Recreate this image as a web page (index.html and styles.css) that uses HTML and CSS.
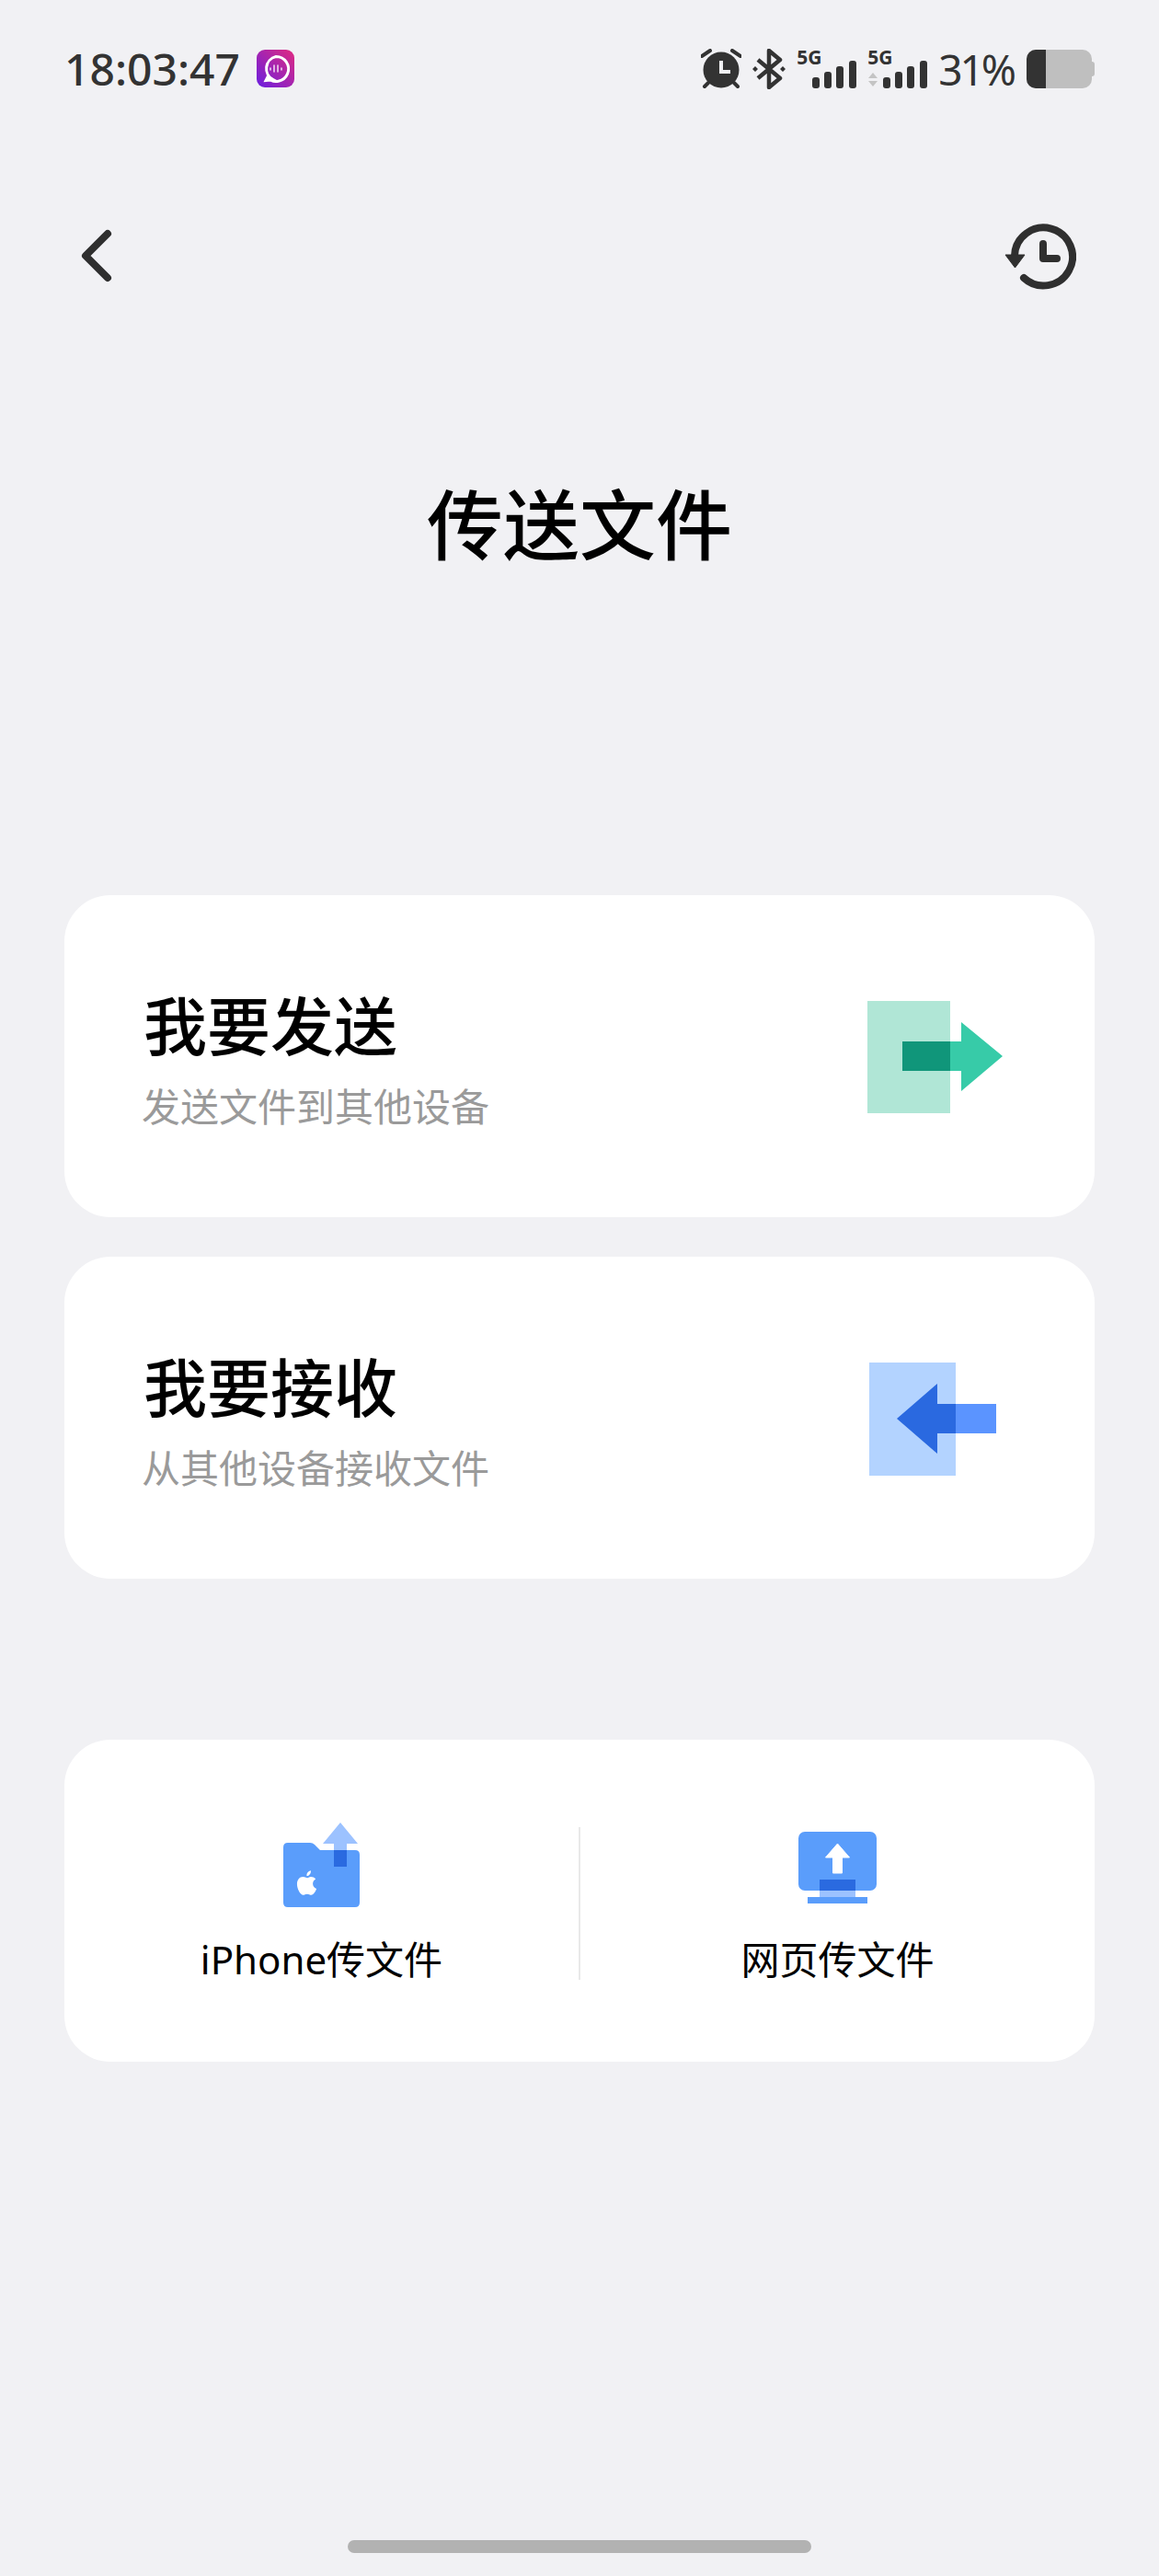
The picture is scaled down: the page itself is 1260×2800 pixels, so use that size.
FILE: index.html
```html
<!DOCTYPE html>
<html lang="zh-CN">
  <head>
    <meta charset="UTF-8" />
    <meta name="viewport" content="width=device-width, initial-scale=1.0" />
    <title>传送文件</title>
    <link rel="stylesheet" href="styles.css">
  </head>
  <body>
    <div class="page">
      <div class="status-bar">
        <div class="status-left">
          <span class="time">18:03:47</span>
          <svg class="app-icon" width="42" height="42" viewBox="0 0 42 42">
            <defs>
              <linearGradient id="appGrad" x1="0" y1="1" x2="1" y2="0">
                <stop offset="0" stop-color="#6a1ee0" />
                <stop offset="1" stop-color="#e02a80" />
              </linearGradient>
            </defs>
            <rect width="41" height="41" rx="9" fill="url(#appGrad)" />
            <path d="M21 7.500a13.500 13.500 0 1 1-9.500 23l-1.500 3 8-.8A13.500 13.500 0 0 1 21 7.500z" fill="none" stroke="#fff" stroke-width="3" />
            <path d="M15 20v2M19 17v7M23 17v7M27 20v2" stroke="#fff" stroke-width="1.500" stroke-linecap="round" opacity=".85" />
          </svg>
        </div>
        <div class="status-right">
          <svg class="alarm" width="44" height="44" viewBox="0 0 44 44">
            <circle cx="22" cy="23" r="19.500" fill="#333" />
            <path d="M1 8l9-6M43 8l-9-6M8 37l-4 4M36 37l4 4" stroke="#333" stroke-width="4" stroke-linecap="round" />
            <path d="M22 13v12h10" fill="none" stroke="#f1f1f4" stroke-width="4" />
          </svg>
          <svg class="bluetooth" width="36" height="44" viewBox="0 0 36 44">
            <path d="M6 12l24 20-12 10V2l12 10L6 32" fill="none" stroke="#333" stroke-width="4.500" stroke-linejoin="round" />
            <path d="M3 19l3 3-3 3-3-3zM33 19l3 3-3 3-3-3z" fill="#333" />
          </svg>
          <div class="signal">
            <span class="net">5G</span>
            <svg width="66" height="44" viewBox="0 0 66 44">
              <rect x="17" y="31" width="8" height="12" rx="3" fill="#333" />
              <rect x="30" y="25" width="8" height="18" rx="3" fill="#333" />
              <rect x="43" y="19" width="8" height="24" rx="3" fill="#333" />
              <rect x="57" y="13" width="8" height="30" rx="3" fill="#333" />
            </svg>
          </div>
          <div class="signal">
            <span class="net">5G</span>
            <svg width="66" height="44" viewBox="0 0 66 44">
              <path d="M6 26l5 6H1zM1 35h10l-5 6z" fill="#c4c4c4" />
              <rect x="17" y="31" width="8" height="12" rx="3" fill="#333" />
              <rect x="30" y="25" width="8" height="18" rx="3" fill="#333" />
              <rect x="43" y="19" width="8" height="24" rx="3" fill="#333" />
              <rect x="57" y="13" width="8" height="30" rx="3" fill="#333" />
            </svg>
          </div>
          <span class="percent">31%</span>
          <div class="battery">
            <div class="battery-level"></div>
            <div class="battery-cap"></div>
          </div>
        </div>
      </div>

      <div class="nav">
        <svg width="40" height="60" viewBox="0 0 40 60">
          <path d="M33 6L9 30l24 24" fill="none" stroke="#2f2f2f" stroke-width="8" stroke-linecap="round" stroke-linejoin="round" />
        </svg>
        <svg width="80" height="80" viewBox="0 0 80 80">
          <path d="M23 64A31.500 31.500 0 1 0 13 40" fill="none" stroke="#2f2f2f" stroke-width="8" stroke-linecap="round" />
          <path d="M3 39h21L13.500 53z" fill="#2f2f2f" stroke="#2f2f2f" stroke-width="1" stroke-linejoin="round" />
          <path d="M44 27v16h15" fill="none" stroke="#2f2f2f" stroke-width="8" stroke-linecap="round" stroke-linejoin="round" />
        </svg>
      </div>

      <h1 class="title">传送文件</h1>

      <div class="card action-card first">
        <div class="card-text">
          <div class="card-title">我要发送</div>
          <div class="card-sub">发送文件到其他设备</div>
        </div>
        <svg class="send-icon" width="147" height="124" viewBox="0 0 147 124">
          <rect width="90" height="122" fill="#b0e6d6" />
          <path d="M38 44h64V23l45 37-45 38V76H38z" fill="#37cba8" />
          <rect x="38" y="44" width="52" height="32" fill="#10967a" />
        </svg>
      </div>

      <div class="card action-card">
        <div class="card-text">
          <div class="card-title">我要接收</div>
          <div class="card-sub">从其他设备接收文件</div>
        </div>
        <svg class="receive-icon" width="139" height="124" viewBox="0 0 139 124">
          <rect width="94" height="123" fill="#b3d3ff" />
          <rect x="94" y="45" width="44" height="32" fill="#5b94ff" />
          <path d="M94 45H74V23L30 61l44 38V77h20z" fill="#2a69e0" />
        </svg>
      </div>

      <div class="card tools-card">
        <div class="tool">
          <svg width="90" height="94" viewBox="-2 0 90 94">
            <path d="M6 22h24q3 0 5 2l6 6h38q5 0 5 5v52q0 5-5 5H6q-5 0-5-5V27q0-5 5-5z" fill="#5a9dfb" />
            <path d="M63 0l19 23H70v7H56v-7H44z" fill="#9cc2ff" />
            <rect x="56" y="30" width="14" height="18" fill="#2a6ae0" />
            <path transform="translate(26.500 65.500) scale(.88) translate(-30 -59)" d="M31 53c-2 0-3.500-1.300-5.500-1.300-4.500 0-7.500 4-7.500 9 0 6 4 13.300 7.500 13.300 1.800 0 2.700-1.200 5-1.200s3 1.200 5 1.200c3 0 5.500-4.500 6.500-7.500-3-1.300-4.500-3.800-4.500-6.300 0-2.500 1.300-4.500 3.500-5.700-1.500-2-3.800-2.800-5.800-2.800-2 0-3 1.300-4.200 1.300zM35 44c-3 .5-5.500 3-5 6.800 3-.2 5.500-3.300 5-6.800z" fill="#fff" />
          </svg>
          <span class="tool-label">iPhone传文件</span>
        </div>
        <div class="divider"></div>
        <div class="tool">
          <svg width="90" height="94" viewBox="0 0 90 94">
            <rect x="2" y="10" width="85" height="64" rx="7" fill="#5a9dfb" />
            <path d="M44.500 23l13 15h-8v17h-10V38h-8z" fill="#fff" stroke="#fff" stroke-width="1" stroke-linejoin="round" />
            <rect x="25" y="62" width="39" height="12" fill="#2a6ae0" />
            <rect x="25" y="74" width="39" height="7" fill="#9cc2ff" />
            <rect x="12" y="81" width="65" height="7" fill="#5a9dfb" />
          </svg>
          <span class="tool-label">网页传文件</span>
        </div>
      </div>

      <div class="home-bar"></div>
    </div>
  </body>
</html>
```

FILE: styles.css
```css
body {
  margin: 0;
  background-color: #f1f1f4;
  font-family: "Noto Sans", "Noto Sans CJK SC", sans-serif;
}

.page {
  width: 1260px;
  height: 2800px;
  box-sizing: border-box;
  padding: 0 70px;
  overflow: hidden;
}

.status-bar {
  display: flex;
  justify-content: space-between;
  align-items: center;
  height: 44px;
  padding-top: 53px;
  color: #333;
}

.status-left,
.status-right {
  display: flex;
  align-items: center;
}

.time {
  font-size: 48px;
  font-weight: 500;
  line-height: 44px;
}

.app-icon {
  margin-left: 18px;
}

.alarm {
  margin-right: 12px;
}

.bluetooth {
  margin-right: 12px;
}

.signal {
  position: relative;
  width: 66px;
  height: 44px;
  margin-right: 11px;
}

.signal svg {
  display: block;
}

.net {
  position: absolute;
  left: 0;
  top: -2px;
  font-size: 21px;
  font-weight: 700;
  line-height: 22px;
}

.percent {
  font-size: 46px;
  line-height: 44px;
  letter-spacing: -3px;
  margin-right: 14px;
}

.battery {
  position: relative;
  width: 71px;
  height: 42px;
  margin-right: 3px;
  background: #bfbfbf;
  border-radius: 10px;
}

.battery-level {
  width: 21px;
  height: 42px;
  background: #333;
  border-radius: 10px 0 0 10px;
}

.battery-cap {
  position: absolute;
  right: -3px;
  top: 13px;
  width: 3px;
  height: 16px;
  background: #bfbfbf;
  border-radius: 0 3px 3px 0;
}

.nav {
  display: flex;
  justify-content: space-between;
  align-items: center;
  margin-top: 141px;
  padding: 0 20px 0 14px;
  height: 80px;
}

.title {
  margin: 0;
  padding-top: 192px;
  text-align: center;
  font-size: 83px;
  font-weight: 500;
  line-height: 120px;
  color: #000;
}

.card {
  box-sizing: border-box;
  background: #fff;
  border-radius: 50px;
  height: 350px;
}

.action-card {
  display: flex;
  justify-content: space-between;
  align-items: center;
  padding: 4px 100px 0 84px;
  margin-top: 43px;
}

.action-card.first {
  margin-top: 343px;
}

.receive-icon {
  margin-right: 6px;
}

.card-title {
  margin-left: 2px;
  font-size: 69px;
  font-weight: 500;
  line-height: 92px;
  color: #000;
}

.card-sub {
  font-size: 42px;
  line-height: 56px;
  margin-top: 14px;
  color: #9a9a9a;
}

.tools-card {
  display: flex;
  align-items: center;
  padding-top: 6px;
  margin-top: 175px;
}

.tool {
  flex: 1;
  display: flex;
  flex-direction: column;
  align-items: center;
}

.tool-label {
  font-size: 42px;
  line-height: 56px;
  margin-top: 27px;
  color: #000;
}

.divider {
  width: 2px;
  height: 166px;
  background: #e9e9e9;
}

.home-bar {
  width: 504px;
  height: 14px;
  margin: 520px auto 0;
  background: #b2b2b2;
  border-radius: 7px;
}
```
